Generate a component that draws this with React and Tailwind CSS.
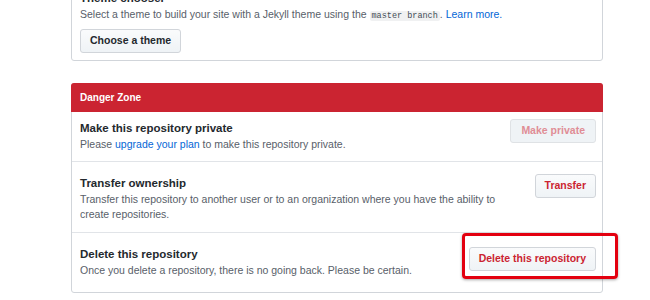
import React from "react";

const font = { fontFamily: '"Liberation Sans", Arial, sans-serif' };

function DangerButton({ children, disabled }) {
    return (
        <button
            className={
                disabled
                    ? "h-[24px] px-[10px] rounded-[3px] border border-[#dfe2e5] bg-[#eff3f6] text-[#e08d95] text-[10.5px] font-bold whitespace-nowrap shrink-0"
                    : "h-[24px] px-[9px] rounded-[3px] border border-[#d1d5da] bg-linear-to-b from-[#fafbfc] to-[#eff3f6] text-[#cb2431] text-[10.5px] font-bold whitespace-nowrap shrink-0"
            }
        >
            {children}
        </button>
    );
}

function Row({ title, children, action, top, bottom, last }) {
    return (
        <div className={`flex items-start gap-4 pl-[8px] pr-[6px] ${top} ${bottom} ${last ? "" : "border-b border-[#e1e4e8]"}`}>
            <div className="flex-1">
                <div className="text-[11.5px] leading-[18px] font-bold text-[#24292e]">{title}</div>
                <p className="text-[10.5px] leading-[15px] text-[#586069]">{children}</p>
            </div>
            {action}
        </div>
    );
}

export default function App() {
    return (
        <div className="w-[650px] h-[300px] overflow-hidden bg-white" style={font}>
            <div className="ml-[71px] w-[532px] -mt-[20px]">
                {/* Theme chooser box, cut at the top */}
                <div className="border border-[#d1d5da] rounded-[3px] pl-[8px] pr-[6px] pt-[8px] pb-[7px]">
                    <div className="text-[11.5px] leading-[18px] font-bold text-[#24292e]">Theme chooser</div>
                    <p className="h-[15px] text-[10.5px] leading-[15px] text-[#586069]">
                        Select a theme to build your site with a Jekyll theme using the{" "}
                        <code className="px-[2px] bg-[#f0f1f2] rounded-[2px] text-[8.5px] leading-none text-[#444d56]" style={{ fontFamily: '"Liberation Mono", monospace' }}>
                            master branch
                        </code>
                        . <span className="text-[#0366d6]">Learn more.</span>
                    </p>
                    <button className="block mt-[7px] h-[24px] px-[9px] rounded-[3px] border border-[#d1d5da] bg-linear-to-b from-[#fafbfc] to-[#eff3f6] text-[#24292e] text-[10.5px] font-bold">
                        Choose a theme
                    </button>
                </div>

                {/* Danger zone */}
                <div className="mt-[22px] border border-[#d1d5da] rounded-[3px]">
                    <div className="-mx-px -mt-px h-[29px] flex items-center pl-[9px] bg-[#cb2431] rounded-t-[3px] text-white text-[10px] font-bold">
                        Danger Zone
                    </div>
                    <Row
                        title="Make this repository private"
                        top="pt-[7px]"
                        bottom="pb-[9px]"
                        action={<DangerButton disabled>Make private</DangerButton>}
                    >
                        Please <span className="text-[#0366d6]">upgrade your plan</span> to make this repository private.
                    </Row>
                    <Row
                        title="Transfer ownership"
                        top="pt-[12px]"
                        bottom="pb-[10px]"
                        action={<DangerButton>Transfer</DangerButton>}
                    >
                        Transfer this repository to another user or to an organization where you have the ability to create repositories.
                    </Row>
                    <Row
                        title="Delete this repository"
                        top="pt-[12px]"
                        bottom="pb-[14px]"
                        last
                        action={
                            <div className="relative shrink-0">
                                <DangerButton>Delete this repository</DangerButton>
                                <div className="absolute -left-[7px] -right-[22px] -top-[12px] -bottom-[8px] border-[3px] border-[#e3000f] rounded-[4px] shadow-[0_1px_3px_rgba(0,0,0,0.35)] pointer-events-none" />
                            </div>
                        }
                    >
                        Once you delete a repository, there is no going back. Please be certain.
                    </Row>
                </div>
            </div>
        </div>
    );
}
